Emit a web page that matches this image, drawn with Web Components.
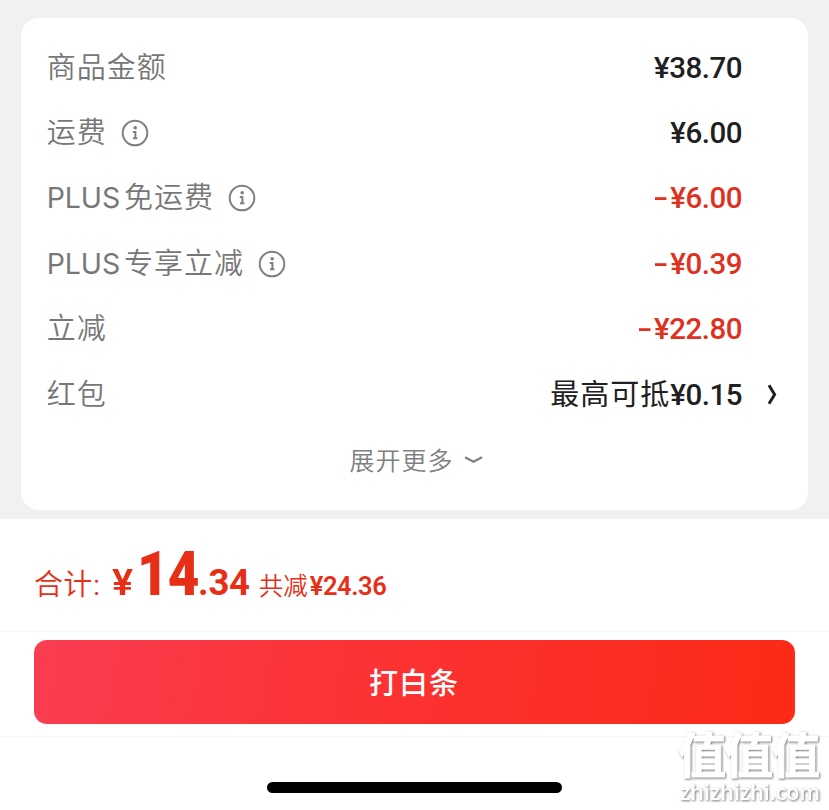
<!DOCTYPE html>
<html lang="zh-CN">
<head>
<meta charset="utf-8">
<title>结算</title>
<style>
html,body{margin:0;height:100%;overflow:hidden;background:#fff}
body{font-family:Inter,"Noto Sans CJK SC",sans-serif}
</style>
</head>
<body>
<checkout-page></checkout-page>
<script>
const define = (name, html) => customElements.define(name, class extends HTMLElement {
  constructor() {
    super();
    this.attachShadow({ mode: 'open' }).innerHTML = html;
  }
});

define('info-icon', `
<style>:host{display:block;width:28px;height:28px;flex:none}svg{display:block}</style>
<svg width="28" height="28" viewBox="0 0 28 28" fill="none" stroke="#808080">
<circle cx="14" cy="14" r="12.3" stroke-width="2"/>
<circle cx="14.2" cy="8.8" r="1.8" fill="#808080" stroke="none"/>
<path d="M11.8 13h2.6v5.6M12 19.3h4.4" stroke-width="2"/>
</svg>`);

define('price-text', `
<style>
:host{display:inline-block;white-space:nowrap;font-family:Roboto,sans-serif;font-weight:500;font-size:29.5px;line-height:40px;letter-spacing:-.5px}
::slotted(i){display:inline-block;font-style:normal;transform:scaleX(1.5);transform-origin:right;margin-right:3px}
</style><slot></slot>`);

define('bill-row', `
<style>
:host{display:flex;align-items:center;height:65.4px;padding:0 66px 0 25.7px;color:#202022;position:relative}
.label{font-size:29px;font-weight:350;letter-spacing:1px;color:#777;white-space:nowrap;line-height:40px}
.icon{margin-left:14.3px}
.value{margin-left:auto;display:flex;align-items:center;white-space:nowrap;font-size:29px;line-height:40px}
.end{position:absolute;right:28px;top:22px;width:14px;height:22px}
</style>
<span class="label"><slot name="label"></slot></span>
<span class="icon"><slot name="icon"></slot></span>
<span class="value"><slot></slot></span>
<span class="end"><slot name="end"></slot></span>`);

define('chevron-right', `
<style>:host{display:block}svg{display:block}</style>
<svg width="14" height="22" viewBox="0 0 14 22" fill="none" stroke="#202022" stroke-width="3"><path d="M3 1.2 8.6 10.5 3 19.8"/></svg>`);

define('expand-more', `
<style>
:host{display:flex;justify-content:center;align-items:center;gap:10px;height:63px;padding-left:3px;color:#808080;font-size:25px;letter-spacing:1px;font-weight:350}
svg{display:block;margin-top:2px}
</style>
<slot></slot><svg width="19" height="10" viewBox="0 0 19 10" fill="none" stroke="#808080" stroke-width="2.3"><path d="M1 2.2 9.5 6.8 18 2.2"/></svg>`);

define('bill-card', `
<style>
:host{display:block;box-sizing:border-box;margin:0 21px;height:492px;padding-top:17px;background:#fff;border-radius:18px}
</style><slot></slot>`);

define('total-bar', `
<style>
:host{display:flex;align-items:baseline;box-sizing:border-box;height:112px;padding-left:34px;color:#e72f17;white-space:nowrap;line-height:110px}
.t{font-size:29px;font-weight:350;letter-spacing:.3px}
.y,.c,.b{font-family:Roboto,sans-serif;font-weight:700}
.y{font-size:36px;font-weight:600;margin-left:11px;width:25px}
.y b{display:inline-block;font-weight:inherit;transform:scaleX(1.1);transform-origin:left}
.b{font-size:62px;letter-spacing:-1px;width:61px}
.b b{display:inline-block;transform:scaleX(.88);transform-origin:left}
.c{font-size:36.5px;letter-spacing:-.3px}
.s{font-size:24.5px;font-weight:350;margin-left:9px}
.v{font-family:Roboto,sans-serif;font-weight:600;font-size:25.5px;letter-spacing:-.4px;margin-left:2px}
</style>
<span class="t">合计:</span><span class="y"><b>¥</b></span><span class="b"><b>14</b></span><span class="c">.34</span><span class="s">共减</span><span class="v">¥24.36</span>`);

define('pay-button', `
<style>
:host{display:block;padding:8px 34px 12px;border-top:1px solid #f9f9f9;border-bottom:1px solid #f7f7f7}
button{display:block;width:100%;height:84px;border:0;padding:0 1px 2px 0;border-radius:13px;background:linear-gradient(100deg,#f93d51 0%,#fb3439 35%,#fc2f2b 60%,#fc2a16 100%);color:#fff;font:500 29px "Noto Sans CJK SC",sans-serif;letter-spacing:1px}
</style><button><slot></slot></button>`);

define('home-indicator', `
<style>:host{display:block;width:295px;height:11px;border-radius:6px;background:#000;margin:45px auto 0}</style>`);

define('site-watermark', `
<style>
:host{position:absolute;right:7px;bottom:4px;width:144px;height:77px;color:#fff;pointer-events:none}
svg{display:block;overflow:visible;filter:drop-shadow(1px 1px 1px #777)}
</style>
<svg width="144" height="77" viewBox="0 0 144 77" fill="#fff">
<text x="0" y="44" font-family="Noto Sans CJK SC,sans-serif" font-weight="700" font-size="48" textLength="142" lengthAdjust="spacing" stroke="#fff" stroke-width="1">值值值</text>
<text x="2" y="71" font-family="Open Sans,sans-serif" font-weight="600" font-size="22" textLength="140" lengthAdjust="spacingAndGlyphs">zhizhizhi.com</text>
</svg>`);

define('checkout-page', `
<style>
:host{display:block;position:relative;width:829px;height:810px;overflow:hidden;background:#fff}
.top{box-sizing:border-box;height:519px;padding-top:18px;background:#f1f1f1}
.red{color:#e0301e}
.cn{letter-spacing:1px;font-weight:400}
.plus{font-size:28.5px;font-weight:400;letter-spacing:-.1px;margin-right:4px}
</style>
<div class="top"><bill-card>
<bill-row><span slot="label">商品金额</span><price-text>¥38.70</price-text></bill-row>
<bill-row><span slot="label">运费</span><info-icon slot="icon"></info-icon><price-text>¥6.00</price-text></bill-row>
<bill-row><span slot="label"><span class="plus">PLUS</span>免运费</span><info-icon slot="icon"></info-icon><price-text class="red"><i>-</i>¥6.00</price-text></bill-row>
<bill-row><span slot="label"><span class="plus">PLUS</span>专享立减</span><info-icon slot="icon"></info-icon><price-text class="red"><i>-</i>¥0.39</price-text></bill-row>
<bill-row><span slot="label">立减</span><price-text class="red"><i>-</i>¥22.80</price-text></bill-row>
<bill-row><span slot="label">红包</span><span class="cn">最高可抵</span><price-text>¥0.15</price-text><chevron-right slot="end"></chevron-right></bill-row>
<expand-more>展开更多</expand-more>
</bill-card></div>
<total-bar></total-bar>
<pay-button>打白条</pay-button>
<home-indicator></home-indicator>
<site-watermark></site-watermark>`);
</script>
</body>
</html>
